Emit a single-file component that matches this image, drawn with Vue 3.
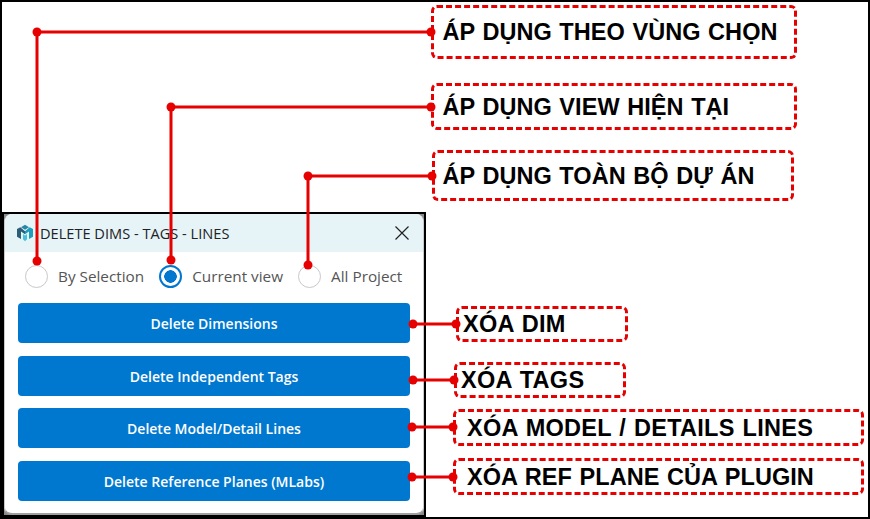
<script setup>
import { ref } from "vue";

const mode = ref("current");

const scopes = [
  { id: "selection", label: "By Selection" },
  { id: "current", label: "Current view" },
  { id: "project", label: "All Project" },
];

const actions = [
  "Delete Dimensions",
  "Delete Independent Tags",
  "Delete Model/Detail Lines",
  "Delete Reference Planes (MLabs)",
];

// note boxes on top of the screenshot
const notes = [
  { text: "ÁP DỤNG THEO VÙNG CHỌN", x: 431, y: 5, w: 366, h: 54, pad: 8.5 },
  { text: "ÁP DỤNG VIEW HIỆN TẠI", x: 431, y: 83, w: 366, h: 47, pad: 8.5 },
  { text: "ÁP DỤNG TOÀN BỘ DỰ ÁN", x: 432, y: 150, w: 362, h: 51, pad: 7.5 },
  { text: "XÓA DIM", x: 456, y: 306, w: 172, h: 36, pad: 4, wide: true },
  { text: "XÓA TAGS", x: 454, y: 362, w: 172, h: 36, pad: 4, wide: true },
  { text: "XÓA MODEL / DETAILS LINES", x: 453, y: 409, w: 411, h: 37, pad: 11, wide: true },
  { text: "XÓA REF PLANE CỦA PLUGIN", x: 453, y: 458, w: 411, h: 37, pad: 11 },
];

const wires = [
  { d: "M37 262V32H431", dots: [[37, 261], [37, 32], [431, 32]] },
  { d: "M171 261V107H431", dots: [[171, 260], [171, 107], [431, 107]] },
  { d: "M308 265V176H432", dots: [[308, 265], [308, 176], [432, 176]] },
  { d: "M413 324H456", dots: [[413, 324], [456, 324]] },
  { d: "M413 380H454", dots: [[413, 380], [454, 380]] },
  { d: "M412 427H453", dots: [[412, 427], [453, 427]] },
  { d: "M412 477H453", dots: [[412, 477], [453, 477]] },
];
</script>

<template>
  <div class="page">
    <div class="window">
      <div class="dialog">
        <div class="titlebar">
          <svg class="logo" viewBox="0 0 18 18" width="18" height="18">
            <path d="M9 .8 13 3.300 9 5.800 5 3.300z" fill="#2a86a6" />
            <path d="M1 5 4.300 3.200 9 7.300v3L5 7.500V15l-4-2.200z" fill="#2b5f78" />
            <path d="M17 5 13.700 3.200 9 7.300v3l4-2.800V15l4-2.200z" fill="#1f9dbd" />
            <path d="M9 11.500l2-1.400v5.200L9 17.200l-2-1.900v-5.200z" fill="#45c3dc" />
          </svg>
          <span class="title">DELETE DIMS - TAGS - LINES</span>
          <svg class="close" viewBox="0 0 14 14" width="14" height="14">
            <path d="M.5.500l13 13M13.500.500l-13 13" fill="none" stroke="#222" stroke-width="1.200" />
          </svg>
        </div>

        <div class="scopes">
          <label v-for="s in scopes" :key="s.id" class="scope">
            <input v-model="mode" class="radio" type="radio" :value="s.id" />
            <span>{{ s.label }}</span>
          </label>
        </div>

        <div class="actions">
          <button v-for="a in actions" :key="a" class="action" type="button">{{ a }}</button>
        </div>
      </div>
    </div>

    <svg class="wires" width="870" height="519" viewBox="0 0 870 519">
      <g v-for="w in wires" :key="w.d">
        <path :d="w.d" fill="none" stroke="#e60000" stroke-width="3" />
        <circle v-for="p in w.dots" :key="p.join()" :cx="p[0]" :cy="p[1]" r="4.500" fill="#e60000" />
      </g>
    </svg>

    <div
      v-for="n in notes"
      :key="n.text"
      class="note"
      :class="{ wide: n.wide }"
      :style="{ left: n.x + 'px', top: n.y + 'px', width: n.w + 'px', height: n.h + 'px', paddingLeft: n.pad + 'px' }"
    >
      {{ n.text }}
    </div>
  </div>
</template>

<style>
html,
body {
  margin: 0;
  background: #fff;
}
</style>

<style scoped>
.page {
  position: relative;
  width: 870px;
  height: 519px;
  box-sizing: border-box;
  border: 2px solid #000;
  background: #fff;
  overflow: hidden;
}

.window {
  position: absolute;
  left: 0;
  top: 210px;
  width: 424px;
  height: 305px;
  box-sizing: border-box;
  border: 2px solid #000;
  background: #8a8a8a;
  font-family: "Open Sans", "Noto Sans", sans-serif;
}

.dialog {
  height: 100%;
  box-sizing: border-box;
  border: 1px solid #c9c9c9;
  border-bottom: 2px solid #a0a0a0;
  border-top: 0;
  border-radius: 8px;
  background: #fff;
  overflow: hidden;
}

.titlebar {
  display: flex;
  align-items: center;
  height: 38px;
  padding: 0 14px 0 11px;
  background: #e6f4f8;
}

.logo {
  flex: none;
  margin-right: 6px;
}

.title {
  flex: 1;
  font-size: 14.600px;
  color: #222;
}

.close {
  flex: none;
}

.scopes {
  display: flex;
  height: 50px;
  align-items: center;
  padding: 0 0 2px 20px;
  box-sizing: border-box;
  gap: 15px;
}

.scope {
  display: flex;
  align-items: center;
  gap: 10px;
  font-size: 15.300px;
  color: #555;
}

.radio {
  appearance: none;
  width: 23px;
  height: 23px;
  margin: 0;
  border: 1px solid #c8c8c8;
  border-radius: 50%;
  background: #fff;
}

.radio:checked {
  border: 2px solid #0078d0;
  background: radial-gradient(circle, #0078d0 0 6px, #fff 6.500px);
}

.actions {
  display: grid;
  gap: 12.670px;
  padding: 1px 13px 0;
}

.action {
  height: 40px;
  border: 0;
  padding: 1px 0 0;
  border-radius: 4px;
  background: #0078d0;
  color: #fff;
  font-family: inherit;
  font-size: 14px;
  font-weight: 600;
}

.wires {
  position: absolute;
  left: -2px;
  top: -2px;
  pointer-events: none;
}

.note {
  position: absolute;
  margin: -2px 0 0 -2px;
  padding-top: 1px;
  display: flex;
  align-items: center;
  box-sizing: border-box;
  border: 3px dashed #e60000;
  border-radius: 6px;
  font-family: "Liberation Sans", Arial, sans-serif;
  font-size: 23.500px;
  font-weight: 700;
  word-spacing: 1px;
  letter-spacing: 0.050px;
  color: #000;
  white-space: nowrap;
}

.note.wide {
  letter-spacing: 0.280px;
}
</style>
